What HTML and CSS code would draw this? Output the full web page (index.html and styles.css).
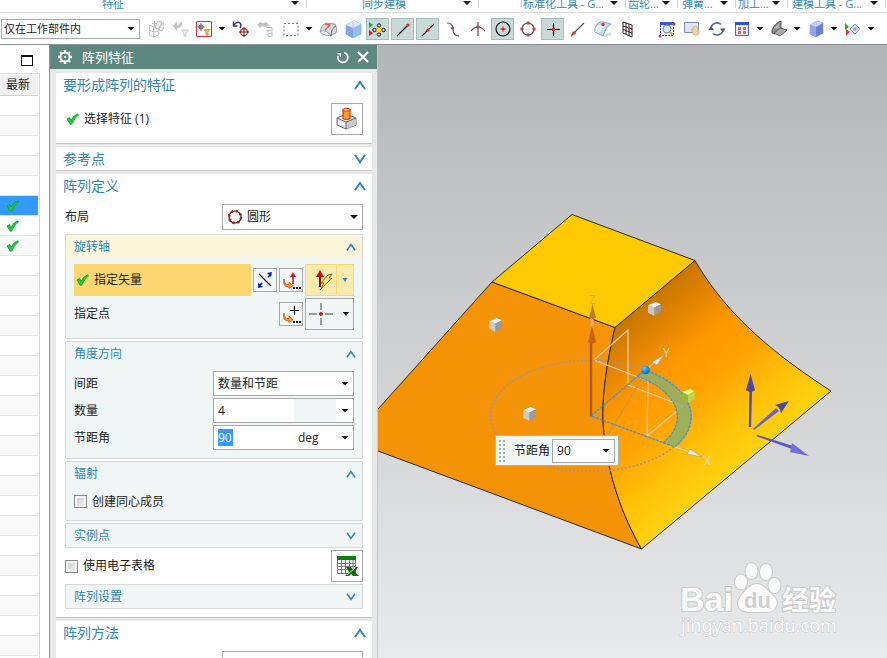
FILE: index.html
```html
<!DOCTYPE html>
<html lang="zh-CN">

<head>
    <meta charset="UTF-8">
    <meta name="viewport" content="width=device-width, initial-scale=1.0">
    <title>阵列特征</title>
    <link rel="stylesheet" href="styles.css">
</head>

<body>
    <!-- shared icons -->
    <svg class="defs" aria-hidden="true">
        <symbol id="check" viewBox="0 0 13 12">
            <path d="M1 6 L3.500 4.500 L5 7 Q8 2 12 .8 L12.400 2 Q8.500 5 5.500 11.300 L4.300 11.300 Z" fill="#16cf3c" stroke="#0b9a26" stroke-width=".8" />
        </symbol>
        <symbol id="up" viewBox="0 0 12 10">
            <path d="M1 9 L6 2 L11 9" fill="none" stroke="#2f86b9" stroke-width="2" />
        </symbol>
        <symbol id="down" viewBox="0 0 12 10">
            <path d="M1 1 L6 8 L11 1" fill="none" stroke="#2f86b9" stroke-width="2" />
        </symbol>
        <symbol id="jump" viewBox="0 0 20 20">
            <path d="M3 9 Q3 15 8 14.500 V12 L12 15.500 L8 18.500 V17 Q1 17 3 9Z" fill="#fb9a1c" stroke="#c44a10" stroke-width=".8" />
            <path d="M12 17h2v2h-2zM15 17h2v2h-2zM18 17h2v2h-2z" fill="#111" />
        </symbol>
        <symbol id="cube" viewBox="0 0 14 14">
            <path d="M1 4 L8 1 L13 3 L7 6Z" fill="#f7f7f7" />
            <path d="M1 4 L7 6 V14 L1 11Z" fill="#c9c9c9" />
            <path d="M7 6 L13 3 V10 L7 14Z" fill="#9a9a9a" />
        </symbol>
    </svg>

    <nav class="tabs">
        <div class="tab t1"><button>特征</button><i class="caret"></i></div>
        <div class="tab t2"><button>同步建模</button><i class="caret"></i></div>
        <div class="tab t3"></div>
        <div class="tab t4"><button>标准化工具 - G...</button><i class="caret"></i></div>
        <div class="tab t5"><button>齿轮...</button><i class="caret"></i></div>
        <div class="tab t6"><button>弹簧...</button><i class="caret"></i></div>
        <div class="tab t5"><button>加工...</button><i class="caret"></i></div>
        <div class="tab t7"><button>建模工具 - G...</button><i class="caret"></i></div>
    </nav>

    <div class="toolbar">
        <span class="pick scope"><select aria-label="选择范围">
                <option>仅在工作部件内</option>
            </select></span>
        <button class="tool" aria-label="组件"><svg viewBox="0 0 20 20">
                <g fill="none" stroke="#c0c0c0" stroke-width="1">
                    <path d="M5.500 6v10l4 2V8zM9.500 8l5-1v9l-5 2M5.500 11l4 2 5-1M10.500 2v5M8 4.500h5" />
                    <ellipse cx="14.500" cy="6" rx="2.500" ry="4" transform="rotate(30 14.500 6)" fill="#e9e9e9" />
                    <ellipse cx="18" cy="8" rx="2" ry="4" transform="rotate(30 18 8)" fill="#e9e9e9" />
                </g>
            </svg></button>
        <button class="tool" aria-label="重置过滤器"><svg viewBox="0 0 20 20">
                <path d="M4 7l4-4v3q3 0 3-3h2q1 6-5 6v3z" fill="#c4c4c4" />
                <path d="M12 11h8l-3 3v4l-2-1v-3z" fill="#e9e9e9" stroke="#c6c6c6" stroke-width=".8" />
            </svg></button>
        <button class="tool" aria-label="选择过滤器"><svg viewBox="0 0 20 20">
                <path d="M2.500 2.500h15v15h-15z" fill="#fff" stroke="#d2334a" />
                <circle cx="7" cy="8" r="2" fill="none" stroke="#b33" />
                <path d="M7 4v8M3.500 8h7" stroke="#555" stroke-width=".9" />
                <path d="M10 10.500h6l-2 3v3l-2-1v-2z" fill="#f6b73c" stroke="#cf8f1c" stroke-width=".7" />
            </svg></button>
        <i class="caret"></i>
        <button class="tool" aria-label="捕捉"><svg viewBox="0 0 20 20">
                <path d="M3 6q3-4 6-2 2 2 0 5M2.500 2.500v4.500h4" fill="none" stroke="#34346e" stroke-width="1.400" />
                <circle cx="13" cy="13" r="3.500" fill="none" stroke="#e02020" stroke-width="1.300" />
                <path d="M13 8v10M8 13h10" stroke="#333" />
            </svg></button>
        <button class="tool" aria-label="向上选择"><svg viewBox="0 0 20 20">
                <path d="M1 6l3-3 3 1q4-2 6 2l-3 2-4-1-2 2z" fill="#c2c2c2" />
                <path d="M10 8.500h6v9h-4v-6M10 11.500h6M12 14.500h4" fill="none" stroke="#c2c2c2" />
            </svg></button>
        <button class="tool" aria-label="矩形选择"><svg viewBox="0 0 20 20">
                <path d="M3 4.500h14v12H3z" fill="none" stroke="#777" stroke-dasharray="2 2" />
            </svg></button>
        <i class="caret"></i>
        <button class="tool" aria-label="圆角"><svg viewBox="0 0 20 20">
                <path d="M2 12q2-7 6-8l9 1q3 4 1 9l-5 2z" fill="#d5dbe3" stroke="#888" stroke-width=".8" />
                <path d="M2 12q8-1 11 5l-6-1q-5-1-5-4z" fill="#fff" stroke="#888" stroke-width=".8" />
                <path d="M13 17q0-8 5-10" fill="none" stroke="#666" />
                <path d="M7 5l5 1-5 5" fill="none" stroke="#e45b4b" stroke-width="1.300" />
            </svg></button>
        <button class="tool" aria-label="实体"><svg viewBox="0 0 20 20">
                <path d="M3 6l8-4 7 3v10l-8 4-7-4z" fill="#8fc0f0" stroke="#8aabdf" stroke-width=".8" />
                <path d="M3 6l7 3v10l-7-4z" fill="#7ba6ec" />
                <path d="M3 6l8-4 7 3-8 4z" fill="#dcebfb" />
                <path d="M10 3v7l7 3M10 10l-6 4" fill="none" stroke="#e8a0b4" stroke-width=".8" />
            </svg></button>
        <button class="tool on" aria-label="启用捕捉点"><svg viewBox="0 0 20 20">
                <path d="M1 3l4 3-4 3z" fill="#0ab42c" />
                <path d="M1 11l4 3-4 3z" fill="#e01818" />
                <g fill="#ddd" stroke="#111">
                    <circle cx="11" cy="6.500" r="1.700" />
                    <circle cx="11" cy="15.500" r="1.700" />
                    <circle cx="6.500" cy="11" r="1.700" />
                    <circle cx="15.500" cy="11" r="1.700" />
                </g>
                <path d="M11 8l3 3-3 3-3-3z" fill="#ffe500" stroke="#a78900" stroke-width=".6" />
            </svg></button>
        <button class="tool on" aria-label="端点"><svg viewBox="0 0 20 20">
                <path d="M4 17L15 6" stroke="#111" stroke-width="1.200" />
                <circle cx="15" cy="6" r="1.600" fill="#d22" />
            </svg></button>
        <button class="tool on" aria-label="中点"><svg viewBox="0 0 20 20">
                <path d="M4 17L16 5" stroke="#111" stroke-width="1.200" />
                <circle cx="10" cy="11" r="1.600" fill="#d22" />
            </svg></button>
        <button class="tool" aria-label="控制点"><svg viewBox="0 0 20 20">
                <path d="M4 4q6 0 6 6 0 7 6 7" fill="none" stroke="#555" stroke-width="1.200" />
                <circle cx="9.500" cy="9" r="1.600" fill="#d33" />
            </svg></button>
        <button class="tool" aria-label="交点"><svg viewBox="0 0 20 20">
                <path d="M3 12q7-8 14 0M10 3v14" fill="none" stroke="#555" stroke-width="1.200" />
                <circle cx="10" cy="8" r="1.700" fill="#d33" />
            </svg></button>
        <button class="tool on" aria-label="圆弧中心"><svg viewBox="0 0 20 20">
                <circle cx="10" cy="10" r="7" fill="none" stroke="#111" stroke-width="1.200" />
                <circle cx="10" cy="10" r="1.600" fill="#d22" />
                <path d="M10 7v6M7 10h6" stroke="#d22" stroke-width=".7" />
            </svg></button>
        <button class="tool" aria-label="象限点"><svg viewBox="0 0 20 20">
                <circle cx="10" cy="10" r="6" fill="none" stroke="#555" stroke-width="1.200" />
                <g fill="#d54040">
                    <circle cx="10" cy="4" r="1.800" />
                    <circle cx="10" cy="16" r="1.800" />
                    <circle cx="4" cy="10" r="1.800" />
                    <circle cx="16" cy="10" r="1.800" />
                </g>
            </svg></button>
        <button class="tool on" aria-label="现有点"><svg viewBox="0 0 20 20">
                <path d="M10.500 4v13M4 10.500h13" stroke="#111" stroke-width="1.200" />
                <circle cx="10.500" cy="10.500" r="1.700" fill="#d22" />
            </svg></button>
        <button class="tool" aria-label="曲线上的点"><svg viewBox="0 0 20 20">
                <path d="M3 17L16 4" stroke="#555" stroke-width="1.200" />
                <circle cx="6" cy="14" r="1.800" fill="#d33" />
            </svg></button>
        <button class="tool" aria-label="面上的点"><svg viewBox="0 0 20 20">
                <path d="M9 17l9-4v3l-7 2z" fill="#d6d6d6" />
                <path d="M2 9q3-7 8-6l8 2q-5 3-6 7l-2 5-8-4z" fill="#b9d6f2" stroke="#6d91bd" stroke-width=".8" />
                <path d="M3 8q4-4 8-2-2 6-5 8l-4-1z" fill="#e3effb" />
                <circle cx="10" cy="5.500" r="1.700" fill="#d33" />
            </svg></button>
        <button class="tool" aria-label="有界栅格"><svg viewBox="0 0 20 20">
                <path d="M5 3l9 3v12l-9-4zM8 4v11M11 5v12M5 7l9 3M5 10.500l9 3.500" fill="none" stroke="#222" />
                <circle cx="11" cy="9" r="1.500" fill="#d33" />
            </svg></button>
        <span class="line"></span>
        <button class="tool" aria-label="适合窗口"><svg viewBox="0 0 20 20">
                <path d="M3.500 6v10.500h13V6" fill="#f3f6ff" stroke="#2238d0" stroke-dasharray="2 1" />
                <path d="M3 3h14v3H3z" fill="#3358dd" />
                <circle cx="10" cy="10" r="4" fill="#dbe9f7" stroke="#7b8b9c" />
                <path d="M13 13l3 3" stroke="#d3a02a" stroke-width="2" />
                <circle cx="3" cy="17" r="1.500" fill="#d33" />
                <circle cx="17" cy="5" r="1.500" fill="#d33" />
            </svg></button>
        <button class="tool" aria-label="平移"><svg viewBox="0 0 20 20">
                <path d="M2.500 3.500h14v10h-14z" fill="#dde5f6" stroke="#7f8bb4" />
                <path d="M9 10l2 1 0-3 2-1 2 1 1 2 1 4-1 2h-4z" fill="#f1d3a0" stroke="#d0a76a" stroke-width=".7" />
            </svg></button>
        <button class="tool" aria-label="旋转"><svg viewBox="0 0 20 20">
                <path d="M4 10a6 6 0 0 1 10-4.500M16 10a6 6 0 0 1-10 4.500" fill="none" stroke="#5568a4" stroke-width="1.600" />
                <path d="M1.500 11l2.500-4 3 4zM13 9.500l3 4 2.500-4z" fill="#44558c" />
            </svg></button>
        <button class="tool" aria-label="布局"><svg viewBox="0 0 20 20">
                <path d="M3.500 3.500h13v13h-13z" fill="#eef1ff" stroke="#4a63c9" />
                <path d="M3 3h14v3H3z" fill="#2f50cf" />
                <path d="M6 8h3v3H6zM11 8h3v3h-3zM6 12h3v3H6zM11 12h3v3h-3z" fill="#ea6a50" />
            </svg></button>
        <i class="caret"></i>
        <button class="tool" aria-label="剖切"><svg viewBox="0 0 20 20">
                <path d="M3 11q3-7 9-9v8l-6 5-3-1z" fill="#8c8c8c" stroke="#555" stroke-width=".9" />
                <path d="M5 10q2-3 5-5v4z" fill="#bbb" />
                <path d="M5 14l6-5 7 2-7 6z" fill="#a9a9a9" stroke="#555" stroke-width=".9" />
            </svg></button>
        <i class="caret"></i>
        <button class="tool" aria-label="着色"><svg viewBox="0 0 20 20">
                <path d="M4 6l7-4 6 2v10l-7 4-6-3z" fill="#6b80d2" stroke="#7c8ccc" stroke-width=".7" />
                <path d="M4 6l7-4 6 2-7 4z" fill="#c6d1f7" />
                <path d="M4 6l6 2v10l-6-3z" fill="#92a7eb" />
            </svg></button>
        <i class="caret"></i>
        <button class="tool" aria-label="显示和隐藏"><svg viewBox="0 0 20 20">
                <path d="M2 4l4 4-4 3z" fill="#13b23a" />
                <path d="M3 10l4 3-4 4z" fill="#df3030" />
                <path d="M7 10l5-5 5 5-5 5z" fill="#dbe3f0" stroke="#7d8cb4" />
                <path d="M10 10l2-2 2 2-2 2z" fill="#8e9ec5" />
            </svg></button>
        <i class="caret"></i>
        <span class="line"></span>
    </div>

    <main class="main">
        <aside class="navigator">
            <button class="restore" aria-label="还原"></button>
            <table class="latest">
                <thead>
                    <tr><th>最新</th></tr>
                </thead>
                <tbody>
                    <tr><td></td></tr>
                    <tr><td></td></tr>
                    <tr><td></td></tr>
                    <tr><td></td></tr>
                    <tr><td></td></tr>
                    <tr class="current"><td><svg class="check"><use href="#check" /></svg></td></tr>
                    <tr><td><svg class="check"><use href="#check" /></svg></td></tr>
                    <tr><td><svg class="check"><use href="#check" /></svg></td></tr>
                    <tr><td></td></tr>
                    <tr><td></td></tr>
                    <tr><td></td></tr>
                    <tr><td></td></tr>
                    <tr><td></td></tr>
                    <tr><td></td></tr>
                    <tr><td></td></tr>
                    <tr><td></td></tr>
                    <tr><td></td></tr>
                    <tr><td></td></tr>
                    <tr><td></td></tr>
                    <tr><td></td></tr>
                    <tr><td></td></tr>
                    <tr><td></td></tr>
                    <tr><td></td></tr>
                    <tr><td></td></tr>
                    <tr><td></td></tr>
                    <tr><td></td></tr>
                    <tr><td></td></tr>
                    <tr><td></td></tr>
                    <tr><td></td></tr>
                </tbody>
            </table>
        </aside>

        <form class="dialog">
            <header class="title">
                <svg class="gear" viewBox="0 0 16 16">
                    <path d="M8 1v14M1 8h14M3 3l10 10M13 3L3 13" stroke="#fff" stroke-width="2.400" />
                    <circle cx="8" cy="8" r="4.600" fill="#5c8880" stroke="#fff" stroke-width="2" />
                    <circle cx="8" cy="8" r="1" fill="#fff" />
                </svg>
                <h1>阵列特征</h1>
                <button type="button" aria-label="重置"><svg viewBox="0 0 14 14">
                        <path d="M8 2.500A5 5 0 1 1 2 6" fill="none" stroke="#fff" stroke-width="1.800" />
                        <path d="M1 3h4v4z" fill="#fff" />
                    </svg></button>
                <button type="button" aria-label="关闭"><svg viewBox="0 0 14 14">
                        <path d="M2 2l10 10M12 2L2 12" stroke="#fff" stroke-width="2.200" />
                    </svg></button>
            </header>

            <section class="section">
                <button type="button" class="head">要形成阵列的特征<svg><use href="#up" /></svg></button>
                <div class="body">
                    <div class="row tall">
                        <svg class="check lead"><use href="#check" /></svg>
                        <span class="grow">选择特征 (1)</span>
                        <button type="button" class="big" aria-label="选择特征"><svg viewBox="0 0 24 24">
                                <path d="M2 11l9-4 10 4v7l-10 4-9-4z" fill="#eee" stroke="#555" stroke-width=".9" />
                                <path d="M11 15l10-4v7l-10 4z" fill="#c9c9c9" />
                                <path d="M2 11l9 4 10-4M11 15v7" fill="none" stroke="#555" stroke-width=".9" />
                                <path d="M8 2.500v9q4 2 7 0v-9q-3-2-7 0z" fill="#fb9d2c" stroke="#f0280c" stroke-width="1.200" />
                                <ellipse cx="11.500" cy="2.800" rx="3.500" ry="1.500" fill="#fde36a" stroke="#f0280c" />
                            </svg></button>
                    </div>
                </div>
            </section>

            <section class="section">
                <button type="button" class="head">参考点<svg><use href="#down" /></svg></button>
            </section>

            <section class="section">
                <button type="button" class="head">阵列定义<svg><use href="#up" /></svg></button>
                <div class="body">
                    <div class="row layout">
                        <label class="grow" for="layout">布局</label>
                        <span class="pick shape">
                            <svg class="ring" viewBox="0 0 16 16">
                                <circle cx="8" cy="8" r="6" fill="none" stroke="#222" stroke-width="1.200" />
                                <circle cx="8" cy="8" r="6" fill="none" stroke="#d01818" stroke-width="2.600" stroke-dasharray="2.200 2.510" />
                            </svg>
                            <select id="layout">
                                <option>圆形</option>
                            </select>
                        </span>
                    </div>

                    <div class="box active">
                        <button type="button" class="subhead">旋转轴<svg><use href="#up" /></svg></button>
                        <div class="inner">
                            <div class="row tall">
                                <div class="step"><svg class="check"><use href="#check" /></svg>指定矢量</div>
                                <button type="button" class="small" aria-label="反向"><svg viewBox="0 0 20 20">
                                        <path d="M4 4l12 12" stroke="#111" stroke-width="1.200" />
                                        <path d="M5 15l10-10" stroke="#0a1fd0" stroke-width="1.600" stroke-dasharray="3 8 3" />
                                        <path d="M12 3l5-1-1 5zM3 13v5l5-1z" fill="#0a1fd0" />
                                    </svg></button>
                                <button type="button" class="small" aria-label="矢量对话框"><svg viewBox="0 0 20 20">
                                        <use href="#jump" />
                                        <path d="M12 14V6" stroke="#c01818" stroke-width="1.500" />
                                        <path d="M9 7l3-5 3 5z" fill="#e01818" />
                                    </svg></button>
                                <div class="split hot">
                                    <button type="button" aria-label="自动判断的矢量"><svg viewBox="0 0 24 24">
                                            <path d="M11 19V8" stroke="#8c1408" stroke-width="2" />
                                            <path d="M7 9l4-7 4 7z" fill="#c81008" />
                                            <path d="M19 7l4-1-3 4h3L11 22l4-7h-3z" fill="#ffe64a" stroke="#444" stroke-width=".8" />
                                        </svg></button>
                                    <button type="button" aria-label="矢量类型"><i class="caret"></i></button>
                                </div>
                            </div>
                            <div class="row tall">
                                <span class="grow">指定点</span>
                                <button type="button" class="small" aria-label="点对话框"><svg viewBox="0 0 20 20">
                                        <use href="#jump" />
                                        <path d="M13.500 2v9M9 6.500h9" stroke="#111" stroke-width="1.200" />
                                    </svg></button>
                                <button type="button" class="split plain" aria-label="自动判断的点"><svg viewBox="0 0 24 24">
                                        <path d="M12 1v7M12 16v7" stroke="#888" stroke-width="1.600" />
                                        <path d="M0 12h8M16 12h8" stroke="#444" stroke-width="1.200" />
                                        <circle cx="12" cy="12" r="2" fill="#d01818" />
                                    </svg><i class="caret"></i></button>
                            </div>
                        </div>
                    </div>

                    <div class="box">
                        <button type="button" class="subhead">角度方向<svg><use href="#up" /></svg></button>
                        <div class="inner">
                            <div class="row">
                                <label class="grow" for="spacing">间距</label>
                                <span class="pick field"><select id="spacing">
                                        <option>数量和节距</option>
                                    </select></span>
                            </div>
                            <div class="row">
                                <label class="grow" for="count">数量</label>
                                <span class="pick field value">
                                    <input id="count" type="text" value="4">
                                    <span class="unit none"></span>
                                </span>
                            </div>
                            <div class="row">
                                <label class="grow" for="pitch">节距角</label>
                                <span class="pick field value">
                                    <input id="pitch" class="marked" type="text" value="90">
                                    <select class="unit" aria-label="单位">
                                        <option>deg</option>
                                    </select>
                                </span>
                            </div>
                        </div>
                    </div>

                    <div class="box">
                        <button type="button" class="subhead">辐射<svg><use href="#up" /></svg></button>
                        <div class="inner">
                            <label class="tick"><input type="checkbox">创建同心成员</label>
                        </div>
                    </div>

                    <div class="box">
                        <button type="button" class="subhead">实例点<svg><use href="#down" /></svg></button>
                    </div>

                    <div class="row tall">
                        <label class="tick grow"><input type="checkbox">使用电子表格</label>
                        <button type="button" class="big" aria-label="电子表格"><svg viewBox="0 0 24 24">
                                <path d="M2.500 3v16.500h18V3M2 9.500h19M2 12.500h19M2 15.500h19M6.500 3v16M10.500 3v16M14.500 3v16M18 3v16" fill="none" stroke="#777" />
                                <path d="M2 2h19v4H2z" fill="#078207" />
                                <path d="M11 13h5l2 3 3-3h2l-3 5 4 4h-6l-2-2-2 2h-4l4-4z" fill="#067006" />
                                <path d="M12 21l8-7" stroke="#fff" stroke-width=".8" />
                            </svg></button>
                    </div>

                    <div class="box">
                        <button type="button" class="subhead">阵列设置<svg><use href="#down" /></svg></button>
                    </div>
                </div>
            </section>

            <section class="section">
                <button type="button" class="head">阵列方法<svg><use href="#up" /></svg></button>
                <div class="body">
                    <div class="row layout">
                        <span class="grow"></span>
                        <span class="pick shape"><select aria-label="方法">
                                <option></option>
                            </select></span>
                    </div>
                </div>
            </section>
        </form>

        <div class="view">
            <svg class="scene" viewBox="378 45 509 613" preserveAspectRatio="xMinYMin slice">
                <defs>
                    <linearGradient id="shade" gradientUnits="userSpaceOnUse" x1="655" y1="294" x2="775" y2="437">
                        <stop offset="0" stop-color="#c87600" />
                        <stop offset=".15" stop-color="#e08300" />
                        <stop offset=".35" stop-color="#ff9800" />
                        <stop offset=".55" stop-color="#ffa303" />
                        <stop offset=".8" stop-color="#ffc30a" />
                        <stop offset="1" stop-color="#ffd20f" />
                    </linearGradient>
                    <radialGradient id="ball" cx=".35" cy=".3" r=".8">
                        <stop offset="0" stop-color="#6fd0ff" />
                        <stop offset=".5" stop-color="#0a92e4" />
                        <stop offset="1" stop-color="#0560a8" />
                    </radialGradient>
                </defs>

                <!-- body -->
                <g stroke="#2b2b2b" stroke-width="1" stroke-linejoin="round">
                    <path d="M370 418 L492 282 L615 327.500 C604 375 601 408 604 433 C608 475 622 515 641.500 549 L370 448Z" fill="#f59307" />
                    <path d="M615 327.500 L695 260.500 C728 318 780 358 831 391 L641.500 549 C622 515 608 475 604 433 C601 408 604 375 615 327.500Z" fill="url(#shade)" />
                    <path d="M572 214.500 L695 260.500 L615 327.500 L492 282Z" fill="#ffca02" />
                </g>

                <!-- datum planes -->
                <path d="M594 360 L628 330 V385 L683 406 L647 436 L648 381Z" fill="none" stroke="#e9c9ae" stroke-width="1.300" />
                <path d="M641 380 L608 435" stroke="#a79a63" />

                <!-- pattern circle and sector -->
                <ellipse cx="590.500" cy="416" rx="100" ry="55.500" fill="none" stroke="#9c90b8" stroke-width="1.400" stroke-dasharray="2 2" />
                <path d="M645 370 A100 55.500 0 0 1 675 447 L663 443 A86 47.500 0 0 0 637 376.500Z" fill="#7fb078" fill-opacity=".75" />
                <path d="M663 443 A86 47.500 0 0 0 637 376.500 L645 370 A100 55.500 0 0 1 675 447 L591 416 L645 370" fill="none" stroke="#3b94e0" stroke-width="1.300" stroke-dasharray="3 1" />

                <!-- Z -->
                <path d="M591 416 V340" stroke="#b5560c" stroke-width="2.400" />
                <path d="M592 328 V318" stroke="#f7a552" stroke-width="3" />
                <path d="M588 342 Q592 345 596 342 L592 326Z" fill="#c8640f" />
                <path d="M589 318 Q592 320 596 318 L592.500 304Z" fill="#bd7a26" />
                <text x="589" y="304" class="axis z">Z</text>

                <!-- Y and X -->
                <path d="M646 370 L655 362" stroke="#ddd" />
                <path d="M652 362 L664 355 L657 365Z" fill="#e8e8e8" stroke="#999" stroke-width=".6" />
                <text x="663" y="357" class="axis">Y</text>
                <path d="M675 447 L690 452" stroke="#ddd" />
                <path d="M690 449 L702 457 L687 454Z" fill="#e8e8e8" stroke="#999" stroke-width=".6" />
                <text x="704" y="465" class="axis">X</text>

                <circle cx="645.500" cy="370" r="4.300" fill="url(#ball)" />
                <use href="#cube" x="488" y="317" width="15" height="15" />
                <use href="#cube" x="647" y="301" width="15" height="15" />
                <use href="#cube" x="522" y="406" width="15" height="15" />
                <path d="M682 392 L690 389 L694.500 391 L688 395Z" fill="#f3f98a" />
                <path d="M682 392 L688 395 V403 L682 400Z" fill="#93b83e" />
                <path d="M688 395 L694.500 391 V399 L688 403Z" fill="#c0d44c" />

                <!-- view triad -->
                <g fill="#4a48a6">
                    <path d="M748.800 427 L749.500 390 H752 L751 427Z" />
                    <path d="M746 390 Q750.500 394 755 390 L750.500 374Z" />
                    <path d="M753 429 L776 408 L779 411 L754 430Z" fill="#6664cd" />
                    <path d="M775 405 Q780 407 781 413 L789 401Z" />
                    <path d="M756 436 L758 435 L793 446 L792 449Z" fill="#5a58c4" />
                    <path d="M792 443 L809 456 L790 452Z" fill="#6f6ddc" />
                </g>

                <!-- watermark -->
                <g class="mark">
                    <text x="680" y="611" class="bai">Bai</text>
                    <ellipse cx="741" cy="582" rx="6" ry="7.500" />
                    <ellipse cx="751.500" cy="571" rx="6" ry="8" />
                    <ellipse cx="766" cy="572" rx="6" ry="8" />
                    <ellipse cx="774.500" cy="585.500" rx="6" ry="7.500" />
                    <path d="M757 584 Q763 584 768 591 Q777 598 777 603 Q776 612 766 612 H748 Q738 611 738 603 Q738 598 746 590 Q751 584 757 584Z" />
                    <text x="744" y="608" class="du">du</text>
                    <text x="782" y="610" class="jy">经验</text>
                    <text x="681" y="632" class="url">jingyan.baidu.com</text>
                </g>
            </svg>

            <div class="floating">
                <svg class="grip" viewBox="0 0 8 24">
                    <path d="M2 1v24M6 1v24" stroke="#aab0b0" stroke-width="2" stroke-dasharray="2 2" />
                </svg>
                <label for="live">节距角</label>
                <span class="pick"><input id="live" type="text" value="90"></span>
            </div>
        </div>
    </main>
</body>

</html>
```
FILE: styles.css
```css
* {
    margin: 0;
    padding: 0;
    box-sizing: border-box;
}

body {
    display: flex;
    flex-direction: column;
    height: 100vh;
    overflow: hidden;
    background: #fff;
    color: #222;
    font-family: "Open Sans", "Noto Sans CJK SC", sans-serif;
    font-size: 12px;
    line-height: 18px;
}

button,
input,
select {
    font: inherit;
    color: inherit;
    background: none;
    border: none;
    border-radius: 0;
    outline: none;
    appearance: none;
}

svg {
    display: block;
    flex: none;
}

.defs {
    position: absolute;
    width: 0;
    height: 0;
}

.caret {
    flex: none;
    width: 10px;
    height: 4px;
    background: #111;
    clip-path: polygon(10% 0, 90% 0, 50% 100%);
}

.tabs {
    display: flex;
    flex: none;
    height: 13px;
    border-bottom: 1px solid #dcdcdc;
    overflow: hidden;
    font-size: 11px;
    line-height: 16px;
    color: #2f8abf;
}

.tab {
    display: flex;
    flex: none;
    align-items: flex-end;
    justify-content: space-between;
    padding: 0 6px 3px 4px;
    height: 8px;
    border-right: 1px solid #d5d5d5;
}

.tab button {
    flex: 1;
    height: 16px;
    margin-bottom: -7px;
    text-align: left;
    white-space: nowrap;
}

.t1 {
    width: 307px;
    padding-left: 102px;
}

.t2 {
    width: 172px;
    padding-left: 55px;
}

.t3 {
    width: 43px;
}

.t4 {
    width: 104px;
    padding-left: 1px;
}

.t5 {
    width: 52px;
    padding-left: 2px;
}

.t6 {
    width: 58px;
}

.t7 {
    width: 98px;
}

/* toolbar */
.toolbar {
    display: flex;
    flex: none;
    align-items: center;
    gap: 2px;
    height: 32px;
    padding: 0 1px;
    border-bottom: 1px solid #87929a;
}

.tool {
    display: flex;
    flex: none;
    align-items: center;
    justify-content: center;
    width: 23px;
    height: 22px;
    border: 1px solid transparent;
}

.tool.on {
    background: #c9d9d7;
    border-color: #a3bfba;
}

.tool svg {
    width: 20px;
    height: 20px;
}

.line {
    width: 1px;
    height: 24px;
    margin: 0 7px 0 5px;
    background: #d5d5d5;
}

/* drop-down frame */
.pick {
    position: relative;
    display: flex;
    flex: none;
    align-items: center;
    background: #fff;
    border: 1px solid #a9a9a9;
}

.pick::after {
    content: "";
    position: absolute;
    right: 4px;
    top: calc(50% - 2px);
    width: 8px;
    height: 4px;
    background: #111;
    clip-path: polygon(0 0, 100% 0, 50% 100%);
    pointer-events: none;
}

.pick select,
.pick input {
    flex: 1;
    min-width: 0;
    height: 100%;
    padding-left: 4px;
}

.scope {
    width: 139px;
    height: 20px;
    font-size: 11px;
}

.pick.scope select {
    padding-left: 2px;
}

.main {
    display: flex;
    flex: 1;
    min-height: 0;
}

/* part navigator */
.navigator {
    flex: none;
    width: 49px;
    overflow: hidden;
}

.restore {
    display: block;
    width: 12px;
    height: 11px;
    margin: 10px 0 7px 21px;
    border: 1px solid #111;
    border-top-width: 2px;
}

.latest {
    width: 40px;
    border-collapse: separate;
    border-spacing: 0;
    border-top: 1px solid #d9d9d9;
    border-right: 1px solid #d9d9d9;
    padding: 1px 1px 0 0;
}

.latest th,
.latest td {
    height: 20px;
    border-bottom: 1px solid #e4e4e4;
}

.latest th {
    height: 21px;
    padding-left: 6px;
    background: #f0f0f0;
    border-bottom-color: #cfcfcf;
    font-weight: normal;
    text-align: left;
    white-space: nowrap;
}

.latest tr:nth-child(even) td {
    background: #f9f9f9;
}

.latest tr.current td {
    background: #3399ff;
}

.latest .check {
    margin-left: 6px;
}

.check {
    width: 13px;
    height: 12px;
}

/* dialog */
.dialog {
    display: flex;
    flex: none;
    flex-direction: column;
    gap: 3px;
    width: 329px;
    padding: 0 5px 0 6px;
    background: #e8e8e8;
    border-left: 1px solid #8c9a97;
    border-right: 1px solid #c6c8c8;
    overflow: hidden;
}

.title {
    display: flex;
    flex: none;
    align-items: center;
    gap: 6px;
    height: 24px;
    margin: 0 -6px 1px;
    padding: 0 8px 0 7px;
    background: #5c8880;
    color: #fff;
}

.title h1 {
    flex: 1;
    padding-left: 3px;
    font-size: 13px;
    font-weight: normal;
}

.gear {
    width: 16px;
    height: 16px;
}

.title button svg {
    width: 14px;
    height: 14px;
}

.section {
    flex: none;
    background: #fff;
    border-bottom: 1px solid #c8c8c8;
}

.head,
.subhead {
    display: flex;
    align-items: center;
    justify-content: space-between;
    width: 100%;
    height: 23px;
    padding: 0 6px 0 7px;
    color: #2f86b9;
    font-size: 14px;
}

.subhead {
    padding-left: 8px;
    font-size: 12px;
}

.head svg {
    width: 12px;
    height: 10px;
}

.subhead svg {
    width: 10px;
    height: 8px;
}

.body {
    display: flex;
    flex-direction: column;
    gap: 2px;
    padding: 7px 9px 8px;
}

.row {
    display: flex;
    align-items: center;
    gap: 2px;
    height: 25px;
}

.row.tall {
    height: 32px;
}

.row.layout {
    height: 26px;
    margin-bottom: 2px;
}

.grow {
    flex: 1;
}

.lead {
    margin: 0 3px 0 1px;
}

.big,
.small {
    display: flex;
    flex: none;
    align-items: center;
    justify-content: center;
    width: 32px;
    height: 32px;
    background: #fff;
    border: 1px solid #a9a9a9;
}

.small {
    width: 24px;
    height: 24px;
    background: #f2f7f7;
}

.big svg {
    width: 24px;
    height: 24px;
}

.small svg {
    width: 20px;
    height: 20px;
}

.shape {
    width: 141px;
    height: 26px;
}

.ring {
    width: 16px;
    height: 16px;
    margin-left: 4px;
}

.box {
    background: #f0f6f6;
    border: 1px solid #d8dada;
}

.box.active .subhead {
    background: #fdf5da;
}

.inner {
    display: flex;
    flex-direction: column;
    gap: 2px;
    padding: 6px 8px 8px;
}

.step {
    display: flex;
    flex: 1;
    align-items: center;
    gap: 5px;
    height: 32px;
    padding-left: 2px;
    background: #fcd66e;
}

.split {
    display: flex;
    flex: none;
    align-items: center;
    justify-content: space-between;
    width: 49px;
    height: 32px;
    border: 1px solid #a9a9a9;
}

.split svg {
    width: 24px;
    height: 24px;
}

.plain {
    padding: 0 3px;
}

.hot {
    background: #f9eaae;
    border-color: #fcd66e;
}

.hot button {
    display: flex;
    flex: 1;
    align-items: center;
    justify-content: center;
    height: 100%;
}

.hot button + button {
    flex: none;
    width: 17px;
    border-left: 1px solid #fcd66e;
}

.split .caret {
    width: 8px;
}

.hot .caret {
    width: 6px;
    background: #2f86b9;
}

.field {
    width: 141px;
    height: 25px;
}

.value {
    justify-content: space-between;
}

.value .unit {
    flex: none;
    width: 59px;
}

.value .none {
    width: 42px;
    height: 100%;
    margin-right: 17px;
    background: #f0f6f6;
}

.pick .marked {
    flex: none;
    width: 15px;
    height: 17px;
    margin-left: 4px;
    padding: 0;
    background: #3399ff;
    color: #fff;
}

.tick {
    display: flex;
    align-items: center;
    gap: 5px;
    height: 21px;
}

.tick input {
    width: 13px;
    height: 13px;
    background: linear-gradient(135deg, #c4c8cc, #f6f6f6);
    border: 1px solid #8a8c8c;
    box-shadow: inset 0 0 0 2px #f4f4f4;
}

/* graphics window */
.view {
    position: relative;
    flex: 1;
    min-width: 0;
    background: linear-gradient(#b3b4b6, #c5c6c8 30%, #e0e1e2 84%, #e9eaeb);
    overflow: hidden;
}

.scene {
    width: 100%;
    height: 100%;
}

.axis {
    fill: #e6dccf;
    font: 12px "Open Sans", sans-serif;
}

.axis.z {
    fill: #f3a044;
}

.mark {
    fill: #fafafb;
    stroke: #c9cacc;
    stroke-width: 2px;
    paint-order: stroke;
}

.bai {
    font: bold 34px "Liberation Sans", sans-serif;
}

.du {
    fill: #cfd0d2;
    stroke: none;
    font: bold 22px "Liberation Sans", sans-serif;
}

.jy {
    font: bold 27px "Noto Sans CJK SC", sans-serif;
}

.url {
    stroke-width: 1px;
    font: 18px "Noto Sans", sans-serif;
}

.floating {
    position: absolute;
    left: 117px;
    top: 390px;
    display: flex;
    align-items: center;
    gap: 2px;
    width: 124px;
    height: 31px;
    padding: 0 3px 0 2px;
    background: #f0f6f6;
    border: 1px solid #a9b5b5;
    white-space: nowrap;
}

.grip {
    width: 8px;
    height: 24px;
    margin-right: 6px;
}

.floating .pick {
    flex: 1;
    min-width: 0;
    height: 24px;
}

.floating input {
    width: 40px;
}
```
